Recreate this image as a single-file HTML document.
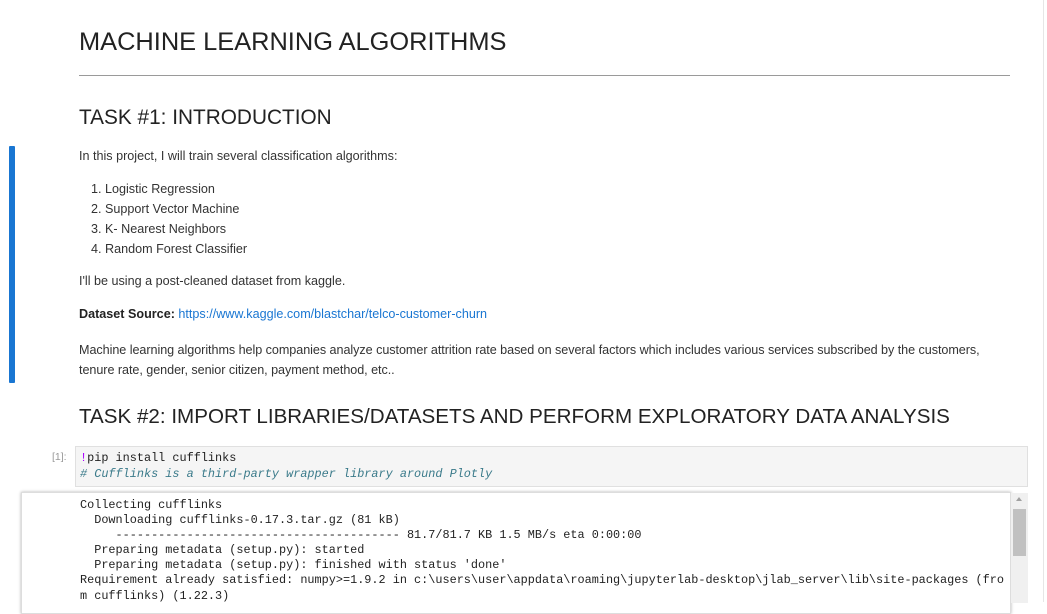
<!DOCTYPE html>
<html><head><meta charset="utf-8"><style>
body{margin:0;width:1047px;height:602px;overflow:hidden;background:#fff;font-family:"Liberation Sans",sans-serif;color:#222;position:relative}
.a{position:absolute;white-space:nowrap}
p{margin:0}
.t{font-size:12.6px;color:#333}
.mono{font-family:"Liberation Mono",monospace;font-size:11.85px;color:#222}
</style></head><body>
<div class="a" style="left:79px;top:28px;font-size:25.4px;color:#222">MACHINE LEARNING ALGORITHMS</div>
<div class="a" style="left:79px;top:75px;width:931px;height:1px;background:#9a9a9a"></div>
<div class="a" style="left:79px;top:106px;font-size:20.8px;color:#222">TASK #1: INTRODUCTION</div>
<div class="a" style="left:9px;top:146px;width:6px;height:237px;background:#1976d2;border-radius:1px"></div>
<div class="a t" style="left:79px;top:149px">In this project, I will train several classification algorithms:</div>
<div class="a t" style="left:91px;top:182px">1. Logistic Regression</div>
<div class="a t" style="left:91px;top:202px">2. Support Vector Machine</div>
<div class="a t" style="left:91px;top:222px">3. K- Nearest Neighbors</div>
<div class="a t" style="left:91px;top:242px">4. Random Forest Classifier</div>
<div class="a t" style="left:79px;top:274px">I'll be using a post-cleaned dataset from kaggle.</div>
<div class="a t" style="left:79px;top:307px"><b style="color:#222">Dataset Source:</b> <span style="color:#1976d2">https://www.kaggle.com/blastchar/telco-customer-churn</span></div>
<div class="a t" style="left:79px;top:340px;line-height:20px;letter-spacing:-0.05px">Machine learning algorithms help companies analyze customer attrition rate based on several factors which includes various services subscribed by the customers,<br>tenure rate, gender, senior citizen, payment method, etc..</div>
<div class="a" style="left:79px;top:405px;font-size:20.6px;color:#222">TASK #2: IMPORT LIBRARIES/DATASETS AND PERFORM EXPLORATORY DATA ANALYSIS</div>
<div class="a" style="left:52px;top:451px;font-size:10.5px;color:#999;font-family:'Liberation Sans',sans-serif">[1]:</div>
<div class="a" style="left:75px;top:446px;width:951px;height:39px;background:#f5f5f5;border:1px solid #e0e0e0"></div>
<div class="a mono" style="left:80px;top:451px;line-height:15.5px"><span style="color:#a0f">!</span>pip install cufflinks<br><i style="color:#3a7a8a">#&nbsp;Cufflinks is a third-party wrapper library around Plotly</i></div>
<div class="a" style="left:21px;top:492px;width:988px;height:120px;border:1px solid #ddd;box-shadow:0 0 3px rgba(0,0,0,.3)"></div>
<div class="a" style="left:1011px;top:493px;width:17px;height:110px;background:#f0f0f0"></div>
<div class="a" style="left:1013px;top:509px;width:13px;height:47px;background:#c1c1c1"></div>
<div class="a" style="left:1016px;top:497px;width:0;height:0;border-left:3.5px solid transparent;border-right:3.5px solid transparent;border-bottom:4px solid #a0a0a0"></div>
<div class="a" style="left:1043px;top:0;width:1px;height:602px;background:#e6e6e6"></div>
<div class="a mono" style="left:80px;top:498px;line-height:15.1px;white-space:pre">Collecting cufflinks
  Downloading cufflinks-0.17.3.tar.gz (81 kB)
     ---------------------------------------- 81.7/81.7 KB 1.5 MB/s eta 0:00:00
  Preparing metadata (setup.py): started
  Preparing metadata (setup.py): finished with status 'done'
Requirement already satisfied: numpy>=1.9.2 in c:\users\user\appdata\roaming\jupyterlab-desktop\jlab_server\lib\site-packages (fro
m cufflinks) (1.22.3)</div>
</body></html>
